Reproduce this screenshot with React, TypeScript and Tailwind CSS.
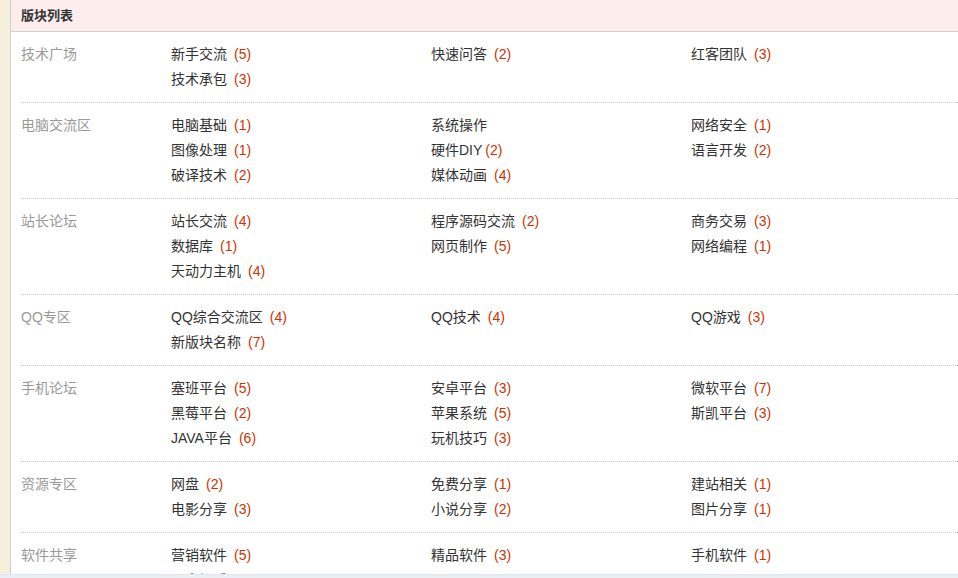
import React from "react";

type Item = { name: string; count?: number; tight?: boolean };
type Section = { label: string; items: Item[] };

const sections: Section[] = [
  {
    label: "技术广场",
    items: [
      { name: "新手交流", count: 5 },
      { name: "快速问答", count: 2 },
      { name: "红客团队", count: 3 },
      { name: "技术承包", count: 3 },
    ],
  },
  {
    label: "电脑交流区",
    items: [
      { name: "电脑基础", count: 1 },
      { name: "系统操作" },
      { name: "网络安全", count: 1 },
      { name: "图像处理", count: 1 },
      { name: "硬件DIY", count: 2, tight: true },
      { name: "语言开发", count: 2 },
      { name: "破译技术", count: 2 },
      { name: "媒体动画", count: 4 },
    ],
  },
  {
    label: "站长论坛",
    items: [
      { name: "站长交流", count: 4 },
      { name: "程序源码交流", count: 2 },
      { name: "商务交易", count: 3 },
      { name: "数据库", count: 1 },
      { name: "网页制作", count: 5 },
      { name: "网络编程", count: 1 },
      { name: "天动力主机", count: 4 },
    ],
  },
  {
    label: "QQ专区",
    items: [
      { name: "QQ综合交流区", count: 4 },
      { name: "QQ技术", count: 4 },
      { name: "QQ游戏", count: 3 },
      { name: "新版块名称", count: 7 },
    ],
  },
  {
    label: "手机论坛",
    items: [
      { name: "塞班平台", count: 5 },
      { name: "安卓平台", count: 3 },
      { name: "微软平台", count: 7 },
      { name: "黑莓平台", count: 2 },
      { name: "苹果系统", count: 5 },
      { name: "斯凯平台", count: 3 },
      { name: "JAVA平台", count: 6 },
      { name: "玩机技巧", count: 3 },
    ],
  },
  {
    label: "资源专区",
    items: [
      { name: "网盘", count: 2 },
      { name: "免费分享", count: 1 },
      { name: "建站相关", count: 1 },
      { name: "电影分享", count: 3 },
      { name: "小说分享", count: 2 },
      { name: "图片分享", count: 1 },
    ],
  },
  {
    label: "软件共享",
    items: [
      { name: "营销软件", count: 5 },
      { name: "精品软件", count: 3 },
      { name: "手机软件", count: 1 },
      { name: "影音娱乐", count: 1 },
    ],
  },
];

export default function App() {
  return (
    <div
      className="flex min-h-[578px] w-[958px] bg-[#f6efdc] text-[14px] text-[#333]"
      style={{ fontFamily: '"Liberation Sans", "Noto Sans CJK SC", sans-serif' }}
    >
      <div className="w-[10px] shrink-0 bg-[#f6efdc]" />
      <div className="flex-1 border-l border-[#cfcfcf] bg-white">
        <div className="flex h-[32px] items-center border-b border-[#d4d0d0] bg-[#fdeded] pl-[10px] text-[13px] font-bold text-[#333]">
          版块列表
        </div>
        {sections.map((s) => (
          <div
            key={s.label}
            className="ml-[10px] flex border-b border-dotted border-[#c8c8c8] py-[10px]"
          >
            <div className="w-[150px] shrink-0 leading-[25px] text-[#999]">{s.label}</div>
            <div className="grid flex-1 grid-cols-[260px_260px_260px]">
              {s.items.map((it) => (
                <div key={it.name} className="h-[25px] whitespace-nowrap leading-[25px]">
                  <span>{it.name}</span>
                  {it.count !== undefined && (
                    <span className={it.tight ? "ml-[3px] text-[#cc3300]" : "ml-[7px] text-[#cc3300]"}>
                      ({it.count})
                    </span>
                  )}
                </div>
              ))}
            </div>
          </div>
        ))}
      </div>
      <div className="fixed bottom-0 left-0 h-[4px] w-[958px] border-t border-[#dfe6ee] bg-[#e9eef5]" />
    </div>
  );
}
